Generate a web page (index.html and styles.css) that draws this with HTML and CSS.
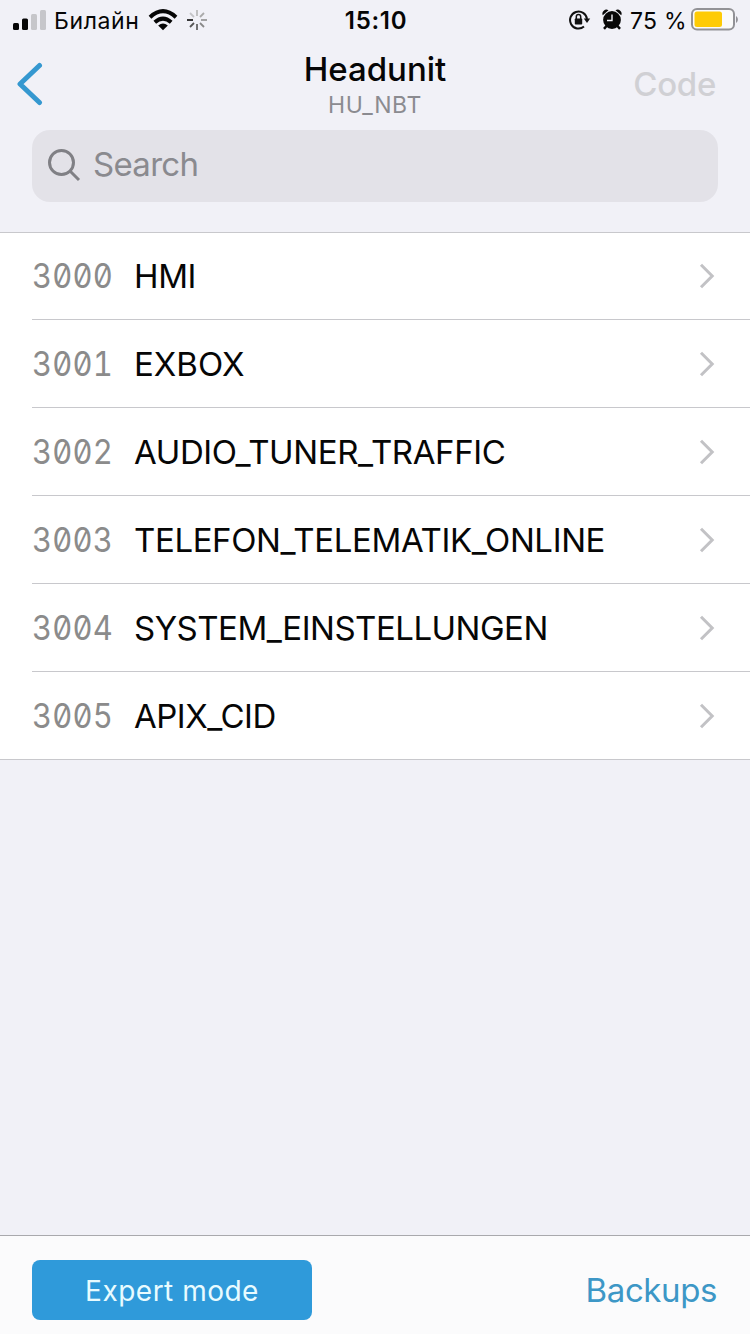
FILE: index.html
```html
<!DOCTYPE html>
<html lang="en">
<head>
<meta charset="utf-8">
<title>Headunit</title>
<link rel="stylesheet" href="styles.css">
</head>
<body>
<div class="screen">
  <header class="status">
    <div class="status-left">
      <svg class="signal" width="34" height="22" viewBox="0 0 34 22">
        <rect x="0" y="14" width="6" height="7" rx="1.500"/>
        <rect x="9" y="9.500" width="6" height="11.500" rx="1.500"/>
        <rect class="off" x="18" y="5" width="6" height="16" rx="1.500"/>
        <rect class="off" x="27" y="1" width="6" height="20" rx="1.500"/>
      </svg>
      <span class="carrier">Билайн</span>
      <svg class="wifi" width="30" height="22" viewBox="0 0 30 22">
        <path class="arc" d="M2 8.200Q15 -3.800 28 8.200"/>
        <path class="arc" d="M6.800 13.300Q15 6 23.200 13.300"/>
        <path d="M10.200 16.500Q15 12.700 19.800 16.500L15 21.300Z"/>
      </svg>
      <svg class="spinner" width="20" height="20" viewBox="0 0 20 20">
        <path d="M0 10h6" stroke="#222"/>
        <path d="M3 17l4-4" stroke="#555"/>
        <path d="M10 20v-6" stroke="#666"/>
        <path d="M17 17l-4-4" stroke="#888"/>
        <path d="M20 10h-6" stroke="#999"/>
        <path d="M17 3l-4 4" stroke="#aaa"/>
        <path d="M10 0v6" stroke="#bbb"/>
        <path d="M3 3l4 4" stroke="#c4c4c8"/>
      </svg>
    </div>
    <div class="clock">15:10</div>
    <div class="status-right">
      <svg class="lock" width="22" height="20" viewBox="0 0 22 20">
        <path class="ring" d="M15 16.600A8.500 8.500 0 1 1 18 9"/>
        <path d="M14.800 8.500h6.400l-3.200 4.500Z"/>
        <rect x="5.800" y="8.500" width="7.400" height="6" rx=".8"/>
        <path class="shackle" d="M7.300 9V6.800a2.200 2.200 0 0 1 4.400 0V9"/>
      </svg>
      <svg class="alarm" width="20" height="21" viewBox="0 0 20 21">
        <circle cx="10" cy="11" r="8.900"/>
        <path d="M.8 6.300A4 4 0 0 1 6.500 1.200ZM19.200 6.300A4 4 0 0 0 13.500 1.200Z"/>
        <path class="legs" d="M4.500 17L2 19.900M15.500 17l2.500 2.900"/>
        <path class="hands" d="M10 5.500V11.500H5"/>
      </svg>
      <span class="percent">75 %</span>
      <svg class="battery" width="48" height="23" viewBox="0 0 48 23">
        <rect class="case" x="1" y="1" width="42" height="20.500" rx="5"/>
        <rect class="charge" x="3.500" y="3.500" width="27.500" height="15.500" rx="2.500"/>
        <path class="tip" d="M45 8c2.500 1.500 2.500 5.500 0 7Z"/>
      </svg>
    </div>
  </header>

  <nav class="navbar">
    <svg class="back" width="28" height="44" viewBox="0 0 28 44"><path d="M23.500 3.500L4 22L23.500 40.500"/></svg>
    <div class="titles">
      <h1 class="title">Headunit</h1>
      <div class="subtitle">HU_NBT</div>
    </div>
    <div class="code">Code</div>
  </nav>

  <div class="search">
    <svg class="lens" width="34" height="34" viewBox="0 0 34 34"><circle cx="14.500" cy="13.500" r="12"/><path d="M23 22l9 9"/></svg>
    <span class="hint">Search</span>
  </div>

  <ul class="list">
    <li class="row"><span class="num">3000</span><span class="name">HMI</span><svg class="chevron" width="16" height="26" viewBox="0 0 16 26"><path d="M2 1.800L13.200 13L2 24.200"/></svg></li>
    <li class="row"><span class="num">3001</span><span class="name wide">EXBOX</span><svg class="chevron" width="16" height="26" viewBox="0 0 16 26"><path d="M2 1.800L13.200 13L2 24.200"/></svg></li>
    <li class="row"><span class="num">3002</span><span class="name">AUDIO_TUNER_TRAFFIC</span><svg class="chevron" width="16" height="26" viewBox="0 0 16 26"><path d="M2 1.800L13.200 13L2 24.200"/></svg></li>
    <li class="row"><span class="num">3003</span><span class="name">TELEFON_TELEMATIK_ONLINE</span><svg class="chevron" width="16" height="26" viewBox="0 0 16 26"><path d="M2 1.800L13.200 13L2 24.200"/></svg></li>
    <li class="row"><span class="num">3004</span><span class="name tight">SYSTEM_EINSTELLUNGEN</span><svg class="chevron" width="16" height="26" viewBox="0 0 16 26"><path d="M2 1.800L13.200 13L2 24.200"/></svg></li>
    <li class="row"><span class="num">3005</span><span class="name tight">APIX_CID</span><svg class="chevron" width="16" height="26" viewBox="0 0 16 26"><path d="M2 1.800L13.200 13L2 24.200"/></svg></li>
  </ul>

  <footer class="toolbar">
    <button class="expert">Expert mode</button>
    <span class="backups">Backups</span>
  </footer>
</div>
</body>
</html>
```

FILE: styles.css
```css
* { box-sizing: border-box; }
body { margin: 0; font-family: Inter, "Liberation Sans", sans-serif; color: #060606; }
svg { display: block; flex: none; fill: none; }
.screen { width: 750px; height: 1334px; display: flex; flex-direction: column; background: #f1f1f7; overflow: hidden; white-space: nowrap; }

.status { height: 40px; padding: 0 11px 0 13px; display: grid; grid-template-columns: 1fr auto 1fr; align-items: center; }
.status-left, .status-right { display: flex; align-items: center; }
.status-right { justify-content: flex-end; }
.signal { fill: #060606; margin-top: -1px; }
.signal .off { fill: #c6c6ca; }
.carrier { margin-left: 7px; width: 87px; padding-top: 2px; font-size: 23px; letter-spacing: .6px; line-height: 38px; }
.wifi { margin-left: 7px; fill: #060606; }
.arc { fill: none; stroke: #060606; stroke-width: 4; }
.spinner { margin-left: 9px; stroke-width: 1.800; }
.clock { padding-top: 1px; font-size: 24px; font-weight: 600; letter-spacing: .7px; line-height: 38px; }
.lock { fill: #111; }
.ring { fill: none; stroke: #111; stroke-width: 2; }
.shackle { fill: none; stroke: #111; stroke-width: 1.500; }
.alarm { margin-left: 11px; margin-top: -1px; fill: #080808; }
.legs { stroke: #080808; stroke-width: 2.500; }
.hands { fill: none; stroke: #f1f1f7; stroke-width: 1.400; }
.percent { margin-left: 8px; padding-top: 2px; font-size: 23px; letter-spacing: .3px; line-height: 38px; }
.battery { margin-left: 4px; margin-top: -1px; }
.case { stroke: #929296; stroke-width: 2; fill: #fafafa; }
.charge { fill: #fecb05; }
.tip { fill: #929296; }

.navbar { height: 90px; padding: 0 34px 0 16px; display: grid; grid-template-columns: 1fr auto 1fr; align-items: start; }
.back { margin-top: 22px; stroke: #3598d0; stroke-width: 5; stroke-linecap: round; stroke-linejoin: round; }
.titles { text-align: center; padding-left: 18px; }
.title { margin: 9px 0 0; font-size: 33px; font-weight: 500; line-height: 40px; letter-spacing: 0; }
.subtitle { padding-top: 1px; font-size: 23px; letter-spacing: .6px; line-height: 30px; color: #8b8b90; }
.code { margin-top: 24px; font-size: 33px; font-weight: 500; letter-spacing: -.3px; line-height: 40px; color: #d0d0d4; text-align: right; }

.search { height: 72px; margin: 0 32px; padding: 0 15px; border-radius: 18px; background: #e3e2e8; display: flex; align-items: center; gap: 12px; }
.lens { stroke: #808085; stroke-width: 3; }
.hint { font-size: 33px; letter-spacing: -.7px; line-height: 40px; color: #8a8a8f; margin-top: -4px; }

.list { list-style: none; margin: 30px 0 0; padding: 0; background: linear-gradient(#c8c8cc, #c8c8cc) 0 0 / 100% 1px no-repeat, linear-gradient(#c8c8cc, #c8c8cc) 0 100% / 100% 1px no-repeat, #fff; }
.row { height: 88px; margin-left: 32px; padding-right: 35px; border-bottom: 1px solid #c8c8cc; display: flex; align-items: center; }
.num { width: 102px; font-size: 34px; letter-spacing: .2px; color: #8b8b8b; font-feature-settings: "tnum", "zero"; transform: scaleX(.91); transform-origin: 0 50%; }
.name { font-size: 33px; letter-spacing: -.38px; }
.wide { letter-spacing: 0; }
.tight { letter-spacing: -.5px; }
.chevron { margin-left: auto; stroke: #c2c2c5; stroke-width: 3; }

.toolbar { margin-top: auto; height: 99px; padding: 24px 33px 0 32px; border-top: 1px solid #a9a9ad; background: #fbfbfc; display: flex; justify-content: space-between; align-items: flex-start; }
.expert { width: 280px; height: 60px; border: 0; border-radius: 8px; padding: 2px 0 0; background: #2f9ada; color: #e8fbff; font: 400 28px/58px Inter, "Liberation Sans", sans-serif; letter-spacing: .5px; }
.backups { font-size: 33px; letter-spacing: -.4px; line-height: 60px; color: #3d97c6; }
```
